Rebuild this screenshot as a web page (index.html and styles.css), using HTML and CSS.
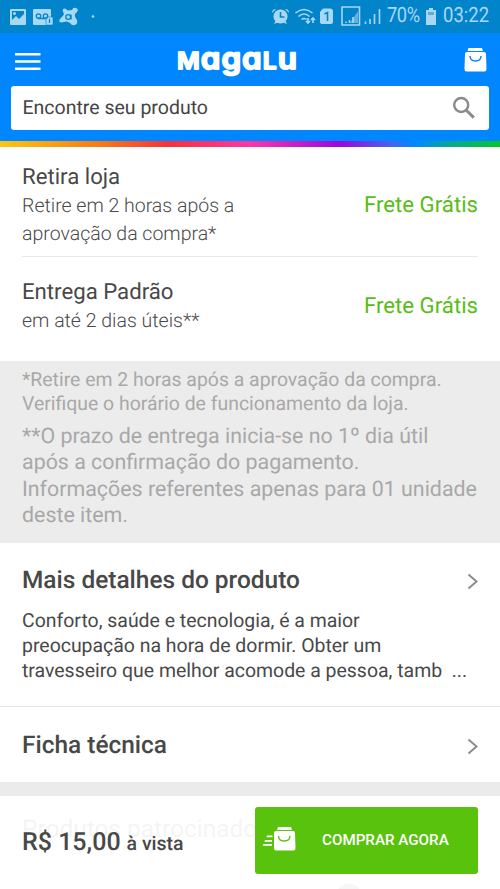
FILE: index.html
```html
<!DOCTYPE html>
<html lang="pt-BR">
<head>
<meta charset="utf-8">
<meta name="viewport" content="width=device-width">
<title>Magalu</title>
<link rel="stylesheet" href="styles.css">
</head>
<body>
<div class="status">
  <svg class="status-left" width="100" height="33" viewBox="0 0 100 33">
    <g fill="#a9d8f5">
      <path fill-rule="evenodd" d="M11 9h14a1 1 0 0 1 1 1v14a1 1 0 0 1-1 1H11a1 1 0 0 1-1-1V10a1 1 0 0 1 1-1zM12 11v9l4-4 3 3 5-5v-3zM14.500 12a1.500 1.500 0 1 1-.01 0z"/>
      <rect x="33" y="9" width="18" height="16" rx="1"/>
      <rect x="46" y="17" width="7" height="8" rx="1" stroke="#0284cb" stroke-width=".6"/>
      <path d="M65 8.500q-3 0-2 3l1 3-4 4.500q-2 3 1 3.500l6-1 3 1.500q2 3 5 2t2-5l-2-3v-3l2-2q2-3-1-4t-4 2l-4 .5z"/>
      <circle cx="93" cy="16.500" r="1.300"/>
    </g>
    <g fill="none" stroke="#0284cb" stroke-width="1.300">
      <circle cx="38.500" cy="16" r="2.200"/><circle cx="45.500" cy="16" r="2.200"/><path d="M38 18.500h8M49.500 19v4"/>
      <circle cx="68.200" cy="17" r="2.400"/><path d="M71 14.500v5"/>
    </g>
  </svg>
  <div class="status-right">
    <svg width="112" height="33" viewBox="0 0 112 33">
      <g fill="#a9d8f5">
        <circle cx="9.500" cy="16.500" r="7"/>
        <path d="M1 13q0-4 4-4zM18 13q0-4-4-4zM3 24l2-4 3 2zM16 24l-2-4-3 2z"/>
        <path d="M52 8.500h7q3 0 3 2.500v11q0 2-2 2h-8q-3 0-3-2V12z"/>
        <path d="M79 23h8V11z" opacity=".55"/>
      </g>
      <g fill="none" stroke="#a9d8f5" stroke-width="1.600">
        <path d="M24.500 13q8.500-7 17 0M27.500 16.500q5.500-5 11 0M30.500 19.500q2.500-2 5 0M37 18v5m-2-2 2 2 2-2M42 23v-5m-2 2 2-2 2 2"/>
        <path d="M71 7h17.500v18h-17.500z"/>
        <path d="M75 21.500V23M78.500 20v3M82 17v6"/>
        <path d="M94.500 21.500V24M99 19v5M103.500 14v10M108.500 9v15"/>
      </g>
      <path fill="none" stroke="#0284cb" stroke-width="1.600" d="M9.500 12v5h4M53.500 14l3-1.500v8.500"/>
    </svg>
    <span class="pct">70%</span>
    <svg class="batt" width="12" height="33" viewBox="0 0 12 33"><path fill="#a9d8f5" d="M4 8h4v2h3v15H1V10h3z"/><path fill="#62a9d3" d="M3 12h6v3H3z"/></svg>
    <span class="time">03:22</span>
  </div>
</div>
<header class="header">
  <div class="bar">
    <svg class="menu" width="26" height="18" viewBox="0 0 26 18"><path fill="#fff" d="M0 0h25.500v2.600H0zM0 7.200h25.500v2.600H0zM0 14.400h25.500V17H0z"/></svg>
    <svg class="logo" width="126" height="40" viewBox="0 0 126 40"><text x="2" y="31" textLength="121" lengthAdjust="spacingAndGlyphs"><tspan class="low">M</tspan>aga<tspan class="low">L</tspan>u</text></svg>
    <svg class="bag" width="23" height="26" viewBox="0 0 23 26"><path fill="#fff" d="M4.500 1h13.500l1 3H3.500zM3 5h17q2 0 2 2l.5 15q0 2.500-2 2.500h-18q-2 0-2-2.500L1 7q0-2 2-2z"/><path fill="none" stroke="#0086ff" stroke-width="1.400" d="M6 9q0 5 5.500 5T17 9"/></svg>
  </div>
  <div class="search"><span>Encontre seu produto</span>
    <svg width="24" height="24" viewBox="0 0 24 24" fill="none" stroke="#8a8a8a"><circle cx="9.200" cy="9" r="7" stroke-width="2.400"/><path stroke-width="3" d="M14.300 14.300l7.500 7.300"/></svg>
  </div>
</header>
<div class="rainbow"></div>
<main>
  <section class="shipping">
    <div class="option first">
      <div><h2>Retira loja</h2><p>Retire em 2 horas após a<br>aprovação da compra*</p></div>
      <strong>Frete Grátis</strong>
    </div>
    <div class="option second">
      <div><h2>Entrega Padrão</h2><p>em até 2 dias úteis**</p></div>
      <strong>Frete Grátis</strong>
    </div>
  </section>
  <section class="notes">
    <p class="note-a">*Retire em 2 horas após a aprovação da compra.<br>Verifique o horário de funcionamento da loja.</p>
    <p class="note-b">**O prazo de entrega inicia-se no 1º dia útil<br>após a confirmação do pagamento.<br>Informações referentes apenas para 01 unidade<br>deste item.</p>
  </section>
  <section class="details">
    <div class="row"><h3>Mais detalhes do produto</h3><svg width="12" height="17" viewBox="0 0 12 17"><path class="chev" d="M1.500 1.500l8 7-8 7"/></svg></div>
    <p>Conforto, saúde e tecnologia, é a maior<br>preocupação na hora de dormir. Obter um<br>travesseiro que melhor acomode a pessoa, tamb &nbsp;...</p>
  </section>
  <section class="specs">
    <div class="row"><h3>Ficha técnica</h3><svg width="12" height="17" viewBox="0 0 12 17"><path class="chev" d="M1.500 1.500l8 7-8 7"/></svg></div>
  </section>
  <section class="sponsored"><h3>Produtos patrocinados</h3><i class="dot"></i></section>
</main>
<footer class="buy">
  <div class="price"><b>R$ 15,00</b> <span>à vista</span></div>
  <button class="cta">
    <svg width="34" height="26" viewBox="0 0 34 26"><path fill="#fff" d="M16 1h13l1 3H15zM14 5h17q2 0 2 2l.5 15q0 2.500-2 2.500h-17.500q-2 0-2-2.500L12 7q0-2 2-2zM5 9.500h5.500v1.800H4.500zM3 14h7v1.800H2.400zM1.500 18h8.500v1.800H.8z"/><path fill="none" stroke="#59c20c" stroke-width="1.400" d="M16.500 10q0 5 5.700 5t5.800-5"/></svg>
    <span>COMPRAR AGORA</span>
  </button>
</footer>
</body>
</html>
```
FILE: styles.css
```css
* { box-sizing: border-box; margin: 0; padding: 0; }
html, body { height: 889px; overflow: hidden; }
body { font-family: Roboto, "Liberation Sans", sans-serif; color: #484848; background: #fff; white-space: nowrap; position: relative; text-rendering: geometricPrecision; }
svg { display: block; flex: none; }
.status { height: 33px; background: #0284cb; display: flex; justify-content: space-between; padding-right: 11px; }
.status-right { display: flex; align-items: center; color: #a9d8f5; line-height: 35px; }
.pct { margin-left: 4px; width: 33px; font-size: 21px; transform: scaleX(.87); transform-origin: left; letter-spacing: -.5px; }
.batt { margin: 0 6px 0 5px; }
.time { font-size: 21px; width: 46px; transform: scaleX(.88); transform-origin: left; }
.header { height: 108px; background: #0086ff; padding: 0 11px; }
.bar { height: 53px; display: flex; align-items: flex-start; padding: 0 2px 0 4px; }
.menu { margin-top: 20px; }
.bag { margin-top: 14px; margin-left: auto; }
.logo { margin: 5px 0 0 134px; }
.logo text { fill: #fff; font-family: Inter, sans-serif; font-weight: 600; font-size: 30px; font-feature-settings: "cv11"; stroke: #fff; stroke-width: 1.800px; stroke-linejoin: round; letter-spacing: 1px; }
.logo .low { font-size: 23.500px; }
.search { height: 44px; background: #fff; border-radius: 3px; display: flex; justify-content: space-between; align-items: center; padding: 0 13px 0 11.500px; font-size: 19.500px; color: #444; }
.search span { margin-top: -2px; }
.rainbow { height: 6px; background: linear-gradient(90deg, #fcc612, #f77a15 20%, #f8303c 34%, #fb37a8 50%, #9a08dd 68%, #3d6cf0 79%, #0086ff 83%, #08a894 90%, #06c52b); }
.shipping { height: 214px; padding: 0 22px; }
.option { display: flex; justify-content: space-between; align-items: center; }
.first { height: 110px; border-bottom: 1px solid #e8e8e8; padding-top: 7px; }
.second { height: 104px; padding-bottom: 6px; }
.option h2 { font-size: 22.200px; font-weight: 400; line-height: 29px; }
.option p { font-size: 19.500px; font-weight: 300; line-height: 28px; }
.option strong { font-size: 22.200px; font-weight: 400; color: #58bd16; }
.notes { height: 182px; background: #ececec; padding: 7px 22px; color: #a8a8a8; }
.note-a { font-size: 19.420px; line-height: 24px; }
.note-b { font-size: 21.380px; line-height: 26.300px; margin-top: 8px; }
.details { height: 164px; padding: 20px 22px 0; border-bottom: 1px solid #e4e4e4; }
.row { display: flex; justify-content: space-between; align-items: center; height: 34px; margin-right: -1px; }
.row svg { margin-top: 3px; }
.row h3 { font-size: 24.450px; font-weight: 500; margin-top: -2px; }
.chev { fill: none; stroke: #8c8c8c; stroke-width: 2; }
.details p { font-size: 19.450px; line-height: 25px; margin-top: 11px; }
.specs { height: 75px; padding: 21px 22px 0; }
.sponsored { height: 107px; border-top: 14px solid #ebebeb; padding: 17px 22px 0; }
.sponsored h3 { font-size: 24.450px; font-weight: 400; line-height: 32px; height: 39px; }
.dot { display: block; width: 28px; height: 28px; margin: 32px 0 0 313px; border-radius: 50%; background: #666; }
.buy { position: absolute; left: 0; right: 0; bottom: 0; height: 93px; background: rgba(255,255,255,.94); display: flex; justify-content: space-between; padding: 11px 22px 0; }
.price { line-height: 72px; }
.price b { font-size: 25px; font-weight: 500; }
.price span { font-size: 19.500px; font-weight: 500; margin-left: 2px; }
.cta { width: 223px; height: 67px; border: 0; border-radius: 3px; background: #59c20c; color: #fff; font: 500 15.200px Roboto, sans-serif; display: flex; align-items: center; padding-left: 7px; }
.cta svg { margin-bottom: 4px; }
.cta span { margin-left: 26px; margin-top: -2px; }
```
